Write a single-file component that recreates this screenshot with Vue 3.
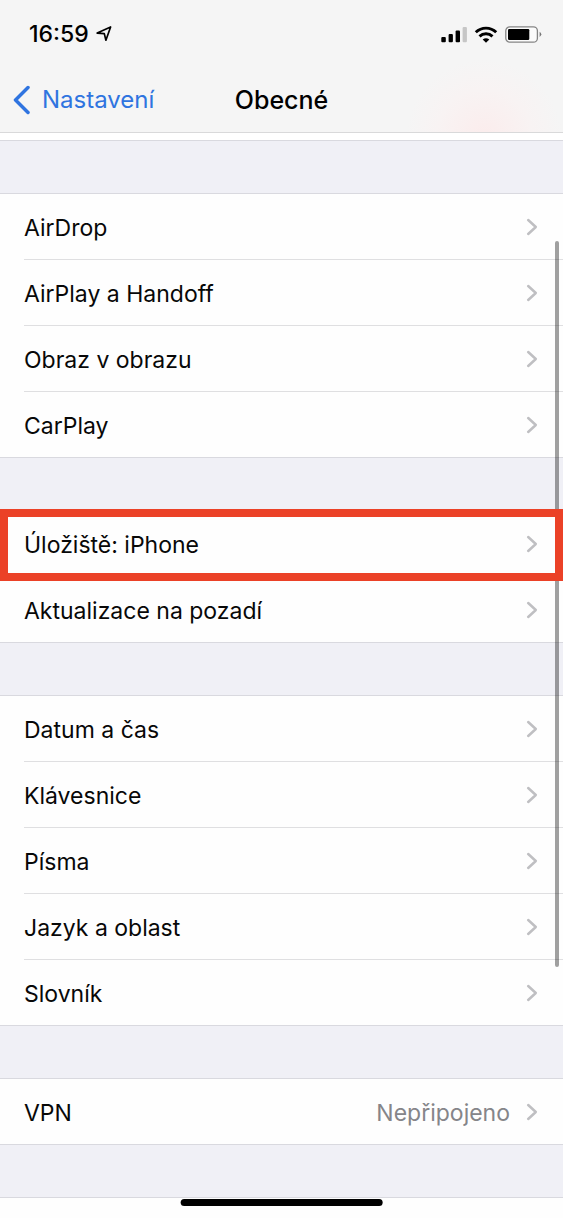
<script setup>
const groups = [
  [{ label: 'AirDrop' }, { label: 'AirPlay a Handoff' }, { label: 'Obraz v obrazu' }, { label: 'CarPlay' }],
  [{ label: 'Úložiště: iPhone', marked: true }, { label: 'Aktualizace na pozadí' }],
  [
    { label: 'Datum a čas' },
    { label: 'Klávesnice' },
    { label: 'Písma' },
    { label: 'Jazyk a oblast' },
    { label: 'Slovník' },
  ],
  [{ label: 'VPN', value: 'Nepřipojeno' }],
]
</script>

<template>
  <div class="screen">
    <header class="top">
      <div class="status">
        <div class="clock">
          <span>16:59</span>
          <svg width="16" height="16" viewBox="0 0 16 16" aria-hidden="true">
            <path d="M1.2 7.1 14.6 1 9.9 14.2 8.3 7.6Z" fill="none" stroke="#000" stroke-width="1.7" stroke-linejoin="round" />
          </svg>
        </div>
        <div class="indicators">
          <svg width="26" height="17" viewBox="0 0 26 17" aria-hidden="true">
            <rect x="0.3" y="11" width="4.5" height="5.3" rx="1" />
            <rect x="7.6" y="8" width="4.3" height="8.3" rx="1" />
            <rect x="14.6" y="4.4" width="4.4" height="11.9" rx="1" />
            <rect x="21.6" y="1" width="4.3" height="15.3" rx="1" fill="#c6c6c6" />
          </svg>
          <svg width="24" height="17" viewBox="0 0 24 17" aria-hidden="true">
            <g fill="none" stroke="#000" stroke-width="2.9">
              <path d="M1.8 6.3C7.5 .7 16.5 .7 22.2 6.3" />
              <path d="M5.5 10.4C9.2 6.9 14.8 6.9 18.5 10.4" />
            </g>
            <path d="M8.7 13.5Q12 11.1 15.3 13.5L12 16.8Z" />
          </svg>
          <svg width="37" height="17" viewBox="0 0 37 17" aria-hidden="true">
            <rect x="0.8" y="0.8" width="31.6" height="15.4" rx="4" fill="#fbfbfb" stroke="#858585" stroke-width="1.3" />
            <rect x="3" y="3" width="21.3" height="11" rx="1.2" />
            <path d="M34.6 5.8Q38 8.3 34.6 10.9Z" fill="#777" />
          </svg>
        </div>
      </div>
      <nav class="nav">
        <a class="back" href="#">
          <svg width="18" height="30" viewBox="0 0 18 30" aria-hidden="true">
            <path d="M16 2.5 3.5 15 16 27.5" fill="none" stroke="#2f74e0" stroke-width="3.5" stroke-linecap="round" stroke-linejoin="round" />
          </svg>
          <span>Nastavení</span>
        </a>
        <h1>Obecné</h1>
      </nav>
    </header>
    <main class="list">
      <div class="cut-row"></div>
      <section v-for="(group, i) in groups" :key="i" class="group">
        <a v-for="row in group" :key="row.label" class="row" :class="{ marked: row.marked }" href="#">
          <span class="cell">
            <span class="label">{{ row.label }}</span>
            <span v-if="row.value" class="value">{{ row.value }}</span>
            <svg class="chevron" width="12" height="18" viewBox="0 0 12 18" aria-hidden="true">
              <path d="M2.2 2 9.8 9 2.2 16" fill="none" stroke="#bfbfc2" stroke-width="2.5" stroke-linecap="round" stroke-linejoin="round" />
            </svg>
          </span>
        </a>
      </section>
      <section class="group rest"></section>
    </main>
    <div class="scrollbar"></div>
    <div class="home"></div>
  </div>
</template>

<style>
body {
  margin: 0;
}
</style>

<style scoped>
.screen {
  position: relative;
  display: flex;
  flex-direction: column;
  min-height: 100vh;
  overflow: hidden;
  background: #f0f0f6;
  color: #080808;
  font-family: Inter, "Liberation Sans", sans-serif;
  font-size: 23px;
  line-height: 30px;
}
a {
  color: inherit;
  text-decoration: none;
}
svg {
  display: block;
  flex: none;
}
.top {
  background: radial-gradient(circle at 86% 104%, #fbecec 0, #f8f3f3 48px, transparent 78px), #f5f5f5;
  border-bottom: 1px solid #d9d9da;
}
.status {
  display: flex;
  align-items: center;
  justify-content: space-between;
  height: 68px;
  padding: 0 21px 0 29px;
}
.clock,
.indicators {
  display: flex;
  align-items: center;
  gap: 7px;
}
.clock {
  color: #000;
  font-size: 23px;
  font-weight: 500;
}
.nav {
  display: grid;
  grid-template-columns: 1fr auto 1fr;
  align-items: center;
  height: 64px;
  padding: 0 12px;
}
.back {
  display: flex;
  align-items: center;
  gap: 12px;
  color: #2f74e0;
  font-size: 24px;
}
h1 {
  margin: 0;
  color: #000;
  font-size: 25px;
  font-weight: 500;
}
.list {
  display: flex;
  flex: 1;
  flex-direction: column;
}
.cut-row {
  height: 7px;
  border-bottom: 1px solid #d9d9df;
  background: #fff;
}
.group {
  margin-top: 52px;
  border-top: 1px solid #d9d9df;
  border-bottom: 1px solid #d9d9df;
  background: #fefefe;
}
.rest {
  flex: 1;
  border-bottom: 0;
}
.row {
  position: relative;
  display: block;
  padding-left: 24px;
}
.cell {
  display: flex;
  align-items: center;
  gap: 16px;
  height: 65px;
  padding-right: 25px;
}
.row + .row .cell {
  border-top: 1px solid #dfdfe1;
}
.label {
  flex: 1;
  padding-top: 2px;
}
.value {
  padding-top: 2px;
  color: #858589;
}
.marked::after {
  position: absolute;
  z-index: 2;
  inset: -2px 0 -5px;
  border: 8px solid #eb4127;
  content: "";
}
.scrollbar {
  position: absolute;
  top: 241px;
  right: 4px;
  width: 4px;
  height: 726px;
  border-radius: 2px;
  background: rgba(0, 0, 0, 0.37);
}
.home {
  position: absolute;
  bottom: 12px;
  left: 50%;
  width: 36%;
  height: 7px;
  border-radius: 4px;
  background: #000;
  transform: translateX(-50%);
}
</style>
